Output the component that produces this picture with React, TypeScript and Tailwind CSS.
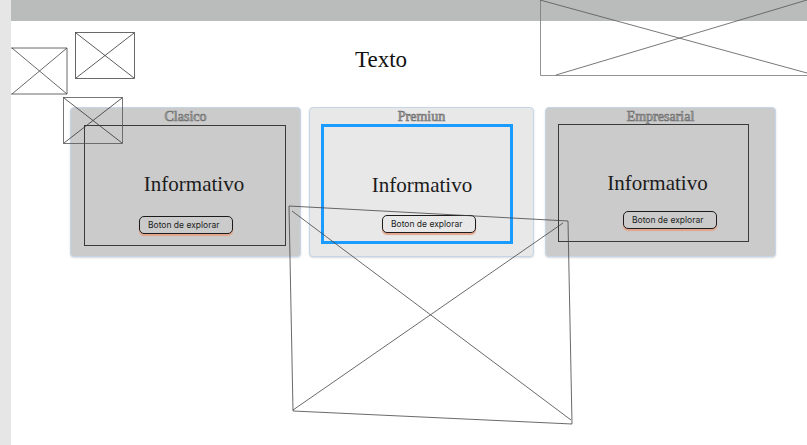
import React from 'react';

interface PlanCardProps {
  title: string;
  variant: 'plain' | 'active';
  width: string;
  innerMargin: string;
  innerHeight: string;
  textShift: string;
  buttonShift: string;
  buttonTop: string;
}

const serif = { fontFamily: '"Liberation Serif", "Times New Roman", serif' };

const PlanCard: React.FC<PlanCardProps> = ({
  title,
  variant,
  width,
  innerMargin,
  innerHeight,
  textShift,
  buttonShift,
  buttonTop,
}) => {
  const isActive = variant === 'active';

  return (
    <div
      className={`${width} h-[150px] shrink-0 rounded-[4px] border border-[#c6d6e9] shadow-[0_1px_2px_rgba(0,0,0,0.15)] ${
        isActive ? 'bg-[#e8e8e8]' : 'bg-[#cbcbcb]'
      }`}
    >
      <div
        className="h-[16px] text-center text-[14px] leading-[18px] text-[#c4c4c4] [-webkit-text-stroke:0.7px_#707070]"
        style={serif}
      >
        {title}
      </div>
      <div
        className={`${innerMargin} ${innerHeight} flex flex-col items-center ${
          isActive ? 'border-[3px] border-[#1a9bff]' : 'border border-[#3a3a3a]'
        }`}
      >
        <div
          className={`mt-[44px] ${textShift} text-[21px] leading-[28px] text-[#1b1b1b]`}
          style={serif}
        >
          Informativo
        </div>
        <button
          className={`${buttonTop} ${buttonShift} w-[94px] h-[18px] rounded-[5px] border-[1.5px] border-[#1c1c1c] pl-[8px] text-left text-[8.5px] leading-[14px] text-[#222] shadow-[0_2px_1px_#e3a58c] ${
            isActive ? 'bg-[#e8e8e8]' : 'bg-[#cbcbcb]'
          }`}
          style={{ fontFamily: 'Inter, "Liberation Sans", sans-serif' }}
        >
          Boton de explorar
        </button>
      </div>
    </div>
  );
};

const Wireframe: React.FC = () => (
  <svg
    className="absolute inset-0 pointer-events-none"
    width={807}
    height={445}
    viewBox="0 0 807 445"
    fill="none"
    stroke="#333"
    strokeWidth={0.8}
  >
    {/* box cut by the left strip */}
    <path d="M11 48 H67 V94 H11 M12 48 L67 94 M12 94 L67 48" stroke="#444" />
    {/* small box, top */}
    <rect x={75.5} y={32.5} width={59} height={46} stroke="#444" />
    <path d="M76 33 L134 78 M76 78 L134 33" />
    {/* small box over the first card */}
    <rect x={63.5} y={97.5} width={59} height={46} stroke="#555" />
    <path d="M64 98 L122 143 M64 143 L122 98" />
    {/* top right box */}
    <path d="M540.5 0 V75.5 H807" stroke="#777" />
    <path d="M540 0 L807 73 M556 75 L807 0" stroke="#555" />
    {/* big skewed box */}
    <path d="M289 206 L568 221 L572 424 L293 411 Z" stroke="#444" />
    <path d="M292 211 L571 420 M293 410 L563 223" stroke="#444" />
  </svg>
);

export default function App() {
  return (
    <div className="relative w-[807px] h-[445px] overflow-hidden bg-white flex">
      <div className="w-[11px] shrink-0 bg-[#e6e6e6]" />
      <div className="flex-1 flex flex-col">
        <div className="h-[21px] bg-[#b9bcba]" />
        <div className="h-[86px] pl-[344px] pt-[26px]">
          <h1 className="text-[23px] leading-[26px] text-[#111]" style={serif}>
            Texto
          </h1>
        </div>
        <div className="flex items-start pl-[59px]">
          <PlanCard
            title="Clasico"
            variant="plain"
            width="w-[231px]"
            innerMargin="ml-[13px] mr-[14px] mt-[1px]"
            innerHeight="h-[121px]"
            textShift="pl-[18px]"
            buttonShift="ml-[2px]"
            buttonTop="mt-[18px]"
          />
          <PlanCard
            title="Premiun"
            variant="active"
            width="w-[225px] ml-[8px]"
            innerMargin="ml-[11px] mr-[20px]"
            innerHeight="h-[120px]"
            textShift="pl-[10px]"
            buttonShift="ml-[24px]"
            buttonTop="mt-[16px]"
          />
          <PlanCard
            title="Empresarial"
            variant="plain"
            width="w-[231px] ml-[11px]"
            innerMargin="ml-[12px] mr-[26px]"
            innerHeight="h-[118px]"
            textShift="pl-[8px]"
            buttonShift="ml-[33px]"
            buttonTop="mt-[14px]"
          />
        </div>
      </div>
      <Wireframe />
    </div>
  );
}
